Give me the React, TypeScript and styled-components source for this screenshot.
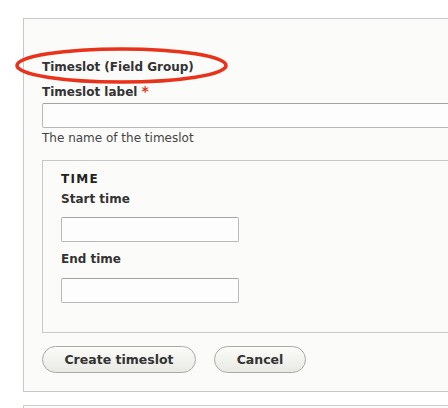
import React from "react";
import styled, { createGlobalStyle } from "styled-components";

const Global = createGlobalStyle`
  html, body { margin: 0; padding: 0; background: #fff; }
  body { font-family: "DejaVu Sans", "Liberation Sans", sans-serif; color: #333; }
`;

const Page = styled.div`
  position: relative;
  width: 448px;
  height: 408px;
  overflow: hidden;
  padding: 18px 0 0 23px;
  box-sizing: border-box;
`;

const Panel = styled.div`
  width: 520px;
  box-sizing: border-box;
  border: 1px solid #c8c8c8;
  background: #fbfbf9;
  padding: 40px 0 18px 18px;
`;

const NextPanel = styled.div`
  width: 520px;
  height: 40px;
  margin-top: 13px;
  border: 1px solid #d0d0d0;
  background: #fbfbf9;
`;

const GroupTitle = styled.div`
  font-size: 12px;
  font-weight: bold;
  line-height: 17px;
  color: #333;
`;

const Label = styled.label<{ $gap?: number }>`
  display: block;
  font-size: 12px;
  font-weight: bold;
  line-height: 17px;
  color: #333;
  margin-top: ${(p) => p.$gap ?? 0}px;
`;

const Required = styled.span`
  color: #e0361a;
  margin-left: 4px;
  font-size: 14px;
`;

const TextInput = styled.input<{ $w: number; $gap: number }>`
  display: block;
  box-sizing: border-box;
  width: ${(p) => p.$w}px;
  height: 25px;
  margin: ${(p) => p.$gap}px 0 0 0;
  border: 1px solid #b9b9b9;
  border-top-color: #a3a3a3;
  border-radius: 2px;
  background: #fdfdfd;
  padding: 0 4px;
  font: inherit;
`;

const Description = styled.div`
  margin-top: 2px;
  font-size: 12px;
  line-height: 17px;
  color: #444;
`;

const Fieldset = styled.div`
  margin-top: 13px;
  border: 1px solid #c8c8c8;
  background: #fbfbf9;
  padding: 10px 0 29px 18px;
`;

const Legend = styled.div`
  font-size: 12px;
  font-weight: bold;
  line-height: 17px;
  letter-spacing: 1.3px;
  text-transform: uppercase;
  color: #222;
`;

const Actions = styled.div`
  display: flex;
  gap: 18px;
  margin-top: 13px;
`;

const Button = styled.button<{ $w: number }>`
  box-sizing: border-box;
  width: ${(p) => p.$w}px;
  height: 27px;
  border: 1px solid #a9a9a6;
  border-radius: 14px;
  background: linear-gradient(#fbfbf9, #e9e9e4);
  font-family: "DejaVu Sans", sans-serif;
  font-weight: bold;
  font-size: 12.5px;
  color: #333;
  padding: 0;
  cursor: pointer;
`;

const Annotation = styled.svg`
  position: absolute;
  left: 14px;
  top: 46px;
  overflow: visible;
`;

export default function App() {
  return (
    <>
      <Global />
      <Page>
        <Panel>
          <GroupTitle>Timeslot (Field Group)</GroupTitle>
          <Label $gap={7}>
            Timeslot label<Required>*</Required>
          </Label>
          <TextInput $w={500} $gap={2} />
          <Description>The name of the timeslot</Description>
          <Fieldset>
            <Legend>Time</Legend>
            <Label $gap={3}>Start time</Label>
            <TextInput $w={178} $gap={9} />
            <Label $gap={9}>End time</Label>
            <TextInput $w={178} $gap={10} />
          </Fieldset>
          <Actions>
            <Button $w={154}>Create timeslot</Button>
            <Button $w={92}>Cancel</Button>
          </Actions>
        </Panel>
        <NextPanel />
        <Annotation width="216" height="40" viewBox="0 0 216 40">
          <ellipse cx="107.5" cy="19.5" rx="104.5" ry="16.5" fill="none" stroke="#e8331a" strokeWidth="3.6" />
        </Annotation>
      </Page>
    </>
  );
}
